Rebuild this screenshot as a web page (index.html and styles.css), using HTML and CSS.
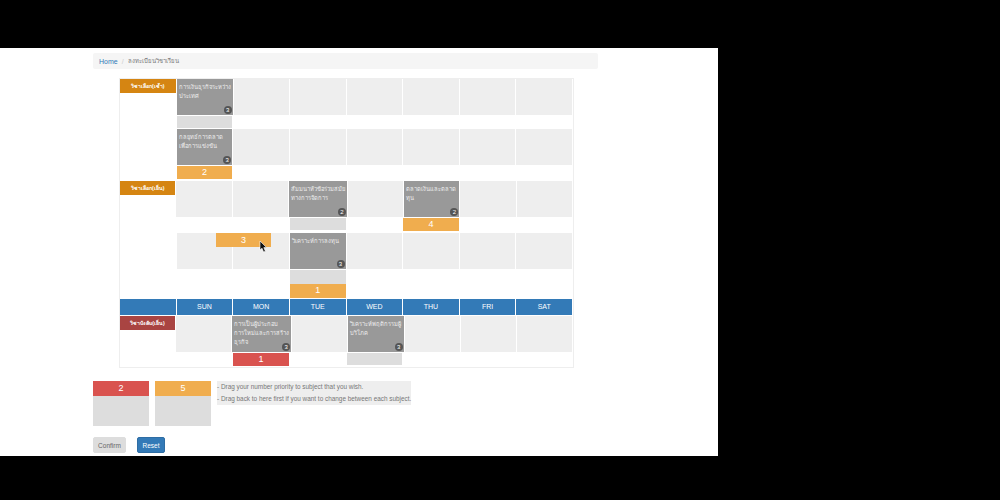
FILE: index.html
```html
<!DOCTYPE html>
<html>
<head>
    <title>ลงทะเบียนวิชาเรียน</title>
    <link rel="stylesheet" href="styles.css">
</head>
<body>
    <div class="page">
        <div class="breadcrumb">
            <a class="crumb-link">Home</a>
            <span class="crumb-sep">/</span>
            <span class="crumb-current">ลงทะเบียนวิชาเรียน</span>
        </div>

        <div class="panel">
            <div class="row">
                <div class="label label-orange">วิชาเลือก(เช้า)</div>
                <div class="subject">การเงินธุรกิจระหว่าง<br>ประเทศ<span class="badge">3</span></div>
                <div class="cell"></div><div class="cell"></div><div class="cell"></div>
                <div class="cell"></div><div class="cell"></div><div class="cell"></div>
            </div>
            <div class="row">
                <div class="slot slot-start"></div>
            </div>

            <div class="row">
                <div></div>
                <div class="subject">กลยุทธ์การตลาด<br>เพื่อการแข่งขัน<span class="badge">3</span></div>
                <div class="cell"></div><div class="cell"></div><div class="cell"></div>
                <div class="cell"></div><div class="cell"></div><div class="cell"></div>
            </div>
            <div class="row row-end">
                <div class="chip chip-orange slot-start">2</div>
            </div>

            <div class="row">
                <div class="label label-orange">วิชาเลือก(เย็น)</div>
                <div class="cell"></div><div class="cell"></div>
                <div class="subject">สัมมนาหัวข้อร่วมสมัย<br>ทางการจัดการ<span class="badge">2</span></div>
                <div class="cell"></div>
                <div class="subject">ตลาดเงินและตลาด<br>ทุน<span class="badge">2</span></div>
                <div class="cell"></div><div class="cell"></div>
            </div>
            <div class="row row-end">
                <div class="slot slot-tue"></div>
                <div class="chip chip-orange slot-thu">4</div>
            </div>

            <div class="row">
                <div></div>
                <div class="cell"></div><div class="cell"></div>
                <div class="subject">วิเคราะห์การลงทุน<span class="badge">3</span></div>
                <div class="cell"></div><div class="cell"></div><div class="cell"></div><div class="cell"></div>
            </div>
            <div class="row">
                <div class="slot-stack slot-tue">
                    <div class="slot slot-tall"></div>
                    <div class="chip chip-orange">1</div>
                </div>
            </div>

            <div class="row">
                <div class="head"></div>
                <div class="head">SUN</div>
                <div class="head">MON</div>
                <div class="head">TUE</div>
                <div class="head">WED</div>
                <div class="head">THU</div>
                <div class="head">FRI</div>
                <div class="head">SAT</div>
            </div>

            <div class="row">
                <div class="label label-red">วิชาบังคับ(เย็น)</div>
                <div class="cell"></div>
                <div class="subject">การเป็นผู้ประกอบ<br>การใหม่และการสร้าง<br>ธุรกิจ<span class="badge">3</span></div>
                <div class="cell"></div>
                <div class="subject">วิเคราะห์พฤติกรรมผู้<br>บริโภค<span class="badge">3</span></div>
                <div class="cell"></div><div class="cell"></div><div class="cell"></div>
            </div>
            <div class="row">
                <div class="chip chip-red slot-mon">1</div>
                <div class="slot slot-wed"></div>
            </div>

            <div class="chip chip-orange chip-drag">3</div>
            <svg class="cursor" width="9" height="13" viewBox="0 0 9 13">
                <path d="M1 1 L1 10 L3 8.2 L4.6 12 L6.4 11.2 L4.8 7.6 L7.6 7.6 Z" fill="#111" stroke="#fff" stroke-width="0.6"/>
            </svg>
        </div>

        <div class="pool">
            <div class="pool-box">
                <div class="chip chip-red chip-pool">2</div>
            </div>
            <div class="pool-box">
                <div class="chip chip-orange chip-pool">5</div>
            </div>
            <div class="note">
                <p>- Drag your number priority to subject that you wish.</p>
                <p>- Drag back to here first if you want to change between each subject.</p>
            </div>
        </div>

        <div class="buttons">
            <button type="button" class="btn btn-confirm">Confirm</button>
            <button type="button" class="btn btn-reset">Reset</button>
        </div>
    </div>
</body>
</html>
```

FILE: styles.css
```css
body {
    margin: 0;
    height: 500px;
    overflow: hidden;
    background-color: #000;
    font-family: "Liberation Sans", Arial, sans-serif;
}
.page {
    width: 625px;
    height: 403px;
    margin-top: 48px;
    padding: 5px 0 0 93px;
    background-color: #fff;
}
.breadcrumb {
    display: flex;
    align-items: center;
    gap: 4px;
    width: 499px;
    height: 16px;
    padding-left: 6px;
    border-radius: 2px;
    background-color: #f5f5f5;
    font-size: 7px;
    color: #777;
}
.crumb-link {
    color: #337ab7;
}
.crumb-sep {
    color: #ccc;
}
.crumb-current {
    font-size: 6px;
}
.panel {
    position: relative;
    width: 452px;
    margin: 9px 0 0 26px;
    padding-right: 1px;
    border: 1px solid #eee;
}
.row {
    display: grid;
    grid-template-columns: repeat(8, 1fr);
    column-gap: 1px;
    margin-bottom: 1px;
    color: #fff;
}
.row-end {
    margin-bottom: 2px;
}
.label {
    align-self: start;
    height: 14px;
    line-height: 14px;
    font-size: 5.2px;
    font-weight: bold;
    text-align: center;
}
.label-orange {
    background-color: #d58512;
}
.label-red {
    background-color: #a94442;
}
.cell {
    height: 36px;
    background-color: #eee;
}
.subject {
    position: relative;
    box-sizing: border-box;
    height: 36px;
    padding: 4px 2px;
    background-color: #999;
    font-size: 5.8px;
    line-height: 9px;
    color: #eee;
    white-space: nowrap;
}
.badge {
    position: absolute;
    right: 1px;
    bottom: 1px;
    width: 8px;
    height: 8px;
    border-radius: 50%;
    background-color: #555;
    color: #fff;
    font-size: 6px;
    line-height: 8px;
    text-align: center;
}
.head {
    height: 16px;
    line-height: 16px;
    background-color: #337ab7;
    font-size: 7px;
    text-align: center;
}
.slot {
    height: 12px;
    background-color: #ddd;
}
.slot-tall {
    height: 14px;
}
.chip {
    height: 13px;
    line-height: 13px;
    font-size: 9px;
    color: #fff;
    text-align: center;
}
.chip-orange {
    background-color: #f0ad4e;
}
.chip-red {
    background-color: #d9534f;
}
.slot-stack .chip {
    height: 14px;
}
.slot-start {
    grid-column: 2;
}
.slot-mon {
    grid-column: 3;
}
.slot-tue {
    grid-column: 4;
}
.slot-wed {
    grid-column: 5;
}
.slot-thu {
    grid-column: 6;
}
.chip-drag {
    position: absolute;
    left: 96px;
    top: 154px;
    width: 55px;
    height: 14px;
    line-height: 14px;
}
.cursor {
    position: absolute;
    left: 139px;
    top: 161px;
}
.pool {
    display: flex;
    gap: 6px;
    margin-top: 13px;
}
.pool-box {
    width: 56px;
    height: 45px;
    background-color: #ddd;
}
.chip-pool {
    height: 15px;
    line-height: 15px;
}
.note {
    height: 24px;
    background-color: #eee;
    font-size: 6.4px;
    line-height: 11.5px;
    color: #777;
    white-space: nowrap;
}
.note p {
    margin: 0;
}
.buttons {
    display: flex;
    gap: 11px;
    margin-top: 11px;
}
.btn {
    box-sizing: border-box;
    height: 16px;
    padding: 0;
    border: 1px solid #ddd;
    border-radius: 2px;
    font-family: inherit;
    font-size: 6.5px;
}
.btn-confirm {
    width: 33px;
    background-color: #ddd;
    color: #666;
}
.btn-reset {
    width: 28px;
    background-color: #337ab7;
    border-color: #2e6da4;
    color: #fff;
}
```
